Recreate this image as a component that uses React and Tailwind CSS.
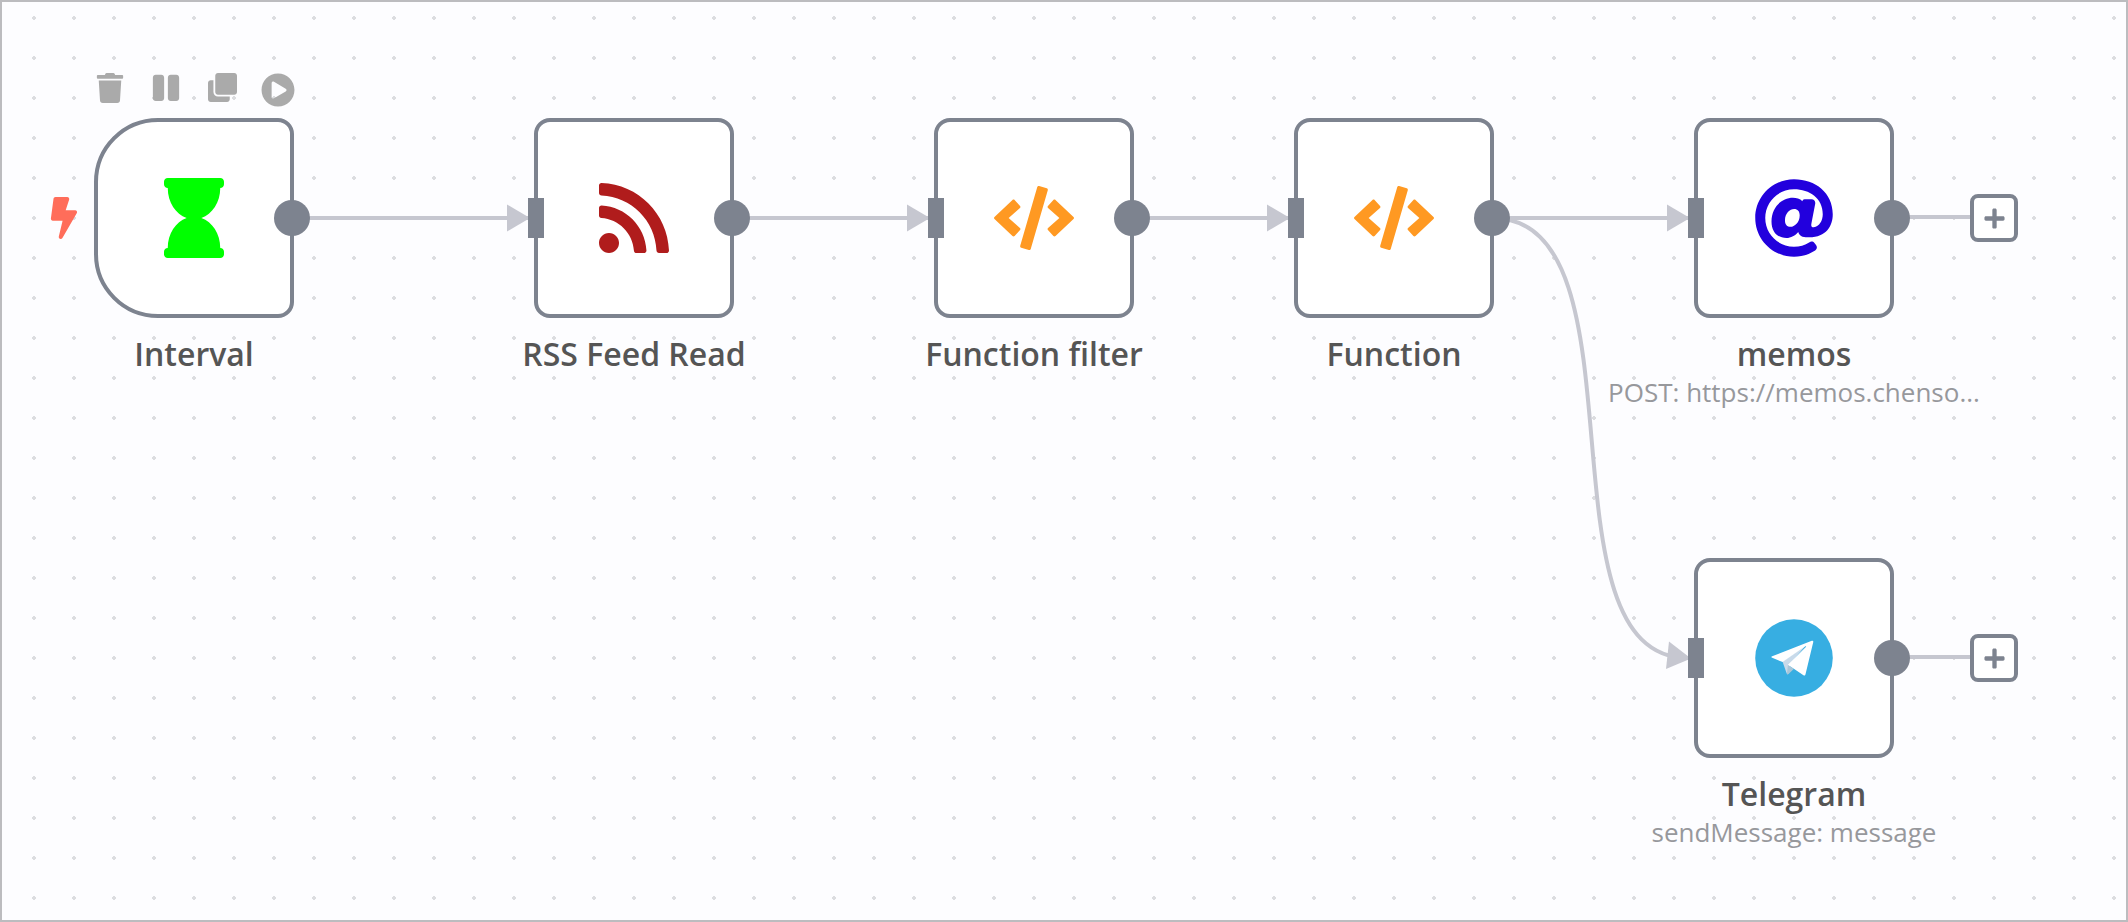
import { FaTrash, FaPause, FaClone, FaPlayCircle, FaBolt, FaHourglass, FaRss, FaCode, FaAt, FaPlus } from "react-icons/fa";

function TelegramIcon() {
  return (
    <svg viewBox="0 0 66 66" className="size-20" aria-hidden="true">
      <circle cx="33" cy="33" r="32" fill="#37aee2" />
      <path fill="#c8daea" d="M23.500 35.800L42.500 22.800 30 37.500 28.300 46.300C27.600 46.600 27.100 46.300 26.900 45.600z" />
      <path fill="#a9c6d8" d="M28 38.600L32.800 42.100 28.500 46.200C28 46.700 27.300 46.600 27.200 46z" />
      <path fill="#fff" d="M28 38.500L40.800 47.300C41.600 47.800 42.300 47.500 42.500 46.500L48.900 19.900C49.100 18.900 48.500 18.500 47.700 18.800L15 31.600C14.100 32 14.200 32.500 15 32.800L23.600 36.300 42.400 23.400C42.900 23.100 43.200 23.500 42.800 23.900z" />
    </svg>
  );
}

const nodes = [
  { id: "interval", name: "Interval", place: "left-[94px] top-[118px]", icon: <FaHourglass className="size-20 text-[#00ff00]" />, trigger: true },
  { id: "rss", name: "RSS Feed Read", place: "left-[534px] top-[118px]", icon: <FaRss className="size-20 text-[#b01c1c]" /> },
  { id: "filter", name: "Function filter", place: "left-[934px] top-[118px]", icon: <FaCode className="size-20 text-[#ff9922]" /> },
  { id: "function", name: "Function", place: "left-[1294px] top-[118px]", icon: <FaCode className="size-20 text-[#ff9922]" /> },
  { id: "memos", name: "memos", note: "POST: https://memos.chenso...", place: "left-[1694px] top-[118px]", icon: <FaAt className="size-20 text-[#2200dd]" />, end: true },
  { id: "telegram", name: "Telegram", note: "sendMessage: message", place: "left-[1694px] top-[558px]", icon: <TelegramIcon />, end: true },
];

const actions = [
  { label: "Delete node", Icon: FaTrash, size: "size-[30px]" },
  { label: "Deactivate node", Icon: FaPause, size: "size-[30px]" },
  { label: "Duplicate node", Icon: FaClone, size: "size-[29px]" },
  { label: "Execute node", Icon: FaPlayCircle, size: "size-[34px]" },
];

function Toolbar() {
  return (
    <div className="absolute bottom-full -left-3 flex items-end pb-[11px]">
      {actions.map(({ label, Icon, size }) => (
        <button key={label} type="button" aria-label={label} className="flex h-[34px] w-14 items-start justify-center text-[#aaaaaa]">
          <Icon className={size} />
        </button>
      ))}
    </div>
  );
}

function Node({ name, note, icon, place, trigger, end }) {
  return (
    <article className={`absolute w-[200px] ${place}`}>
      {trigger && <Toolbar />}
      {trigger && <FaBolt className="absolute top-[79px] -left-[51px] size-[42px] text-[#ff6d5a]" />}
      <div className={`flex h-[200px] items-center justify-center border-4 border-[#7d838f] bg-white ${trigger ? "rounded-l-[64px] rounded-r-2xl" : "rounded-2xl"}`}>
        {icon}
      </div>
      {!trigger && <span className="absolute top-20 -left-1.5 h-10 w-4 bg-[#7d838f]" />}
      {end && (
        <div className="absolute top-[76px] left-[198px] flex items-center">
          <span className="h-1 w-[78px] -translate-y-px bg-[#c6c7d0]" />
          <button type="button" aria-label={`Add node after ${name}`} className="flex size-12 items-center justify-center rounded-lg border-4 border-[#7d838f] bg-white text-[#7d838f]">
            <FaPlus className="size-[23px]" />
          </button>
        </div>
      )}
      <span className="absolute top-[82px] left-[180px] size-9 rounded-full bg-[#7d838f]" />
      <div className="-mx-24 mt-4 text-center whitespace-nowrap">
        <h2 className="text-[32px] leading-10 font-semibold text-[#555555]">{name}</h2>
        {note && <p className="text-[26px] leading-9 text-[#97989c]">{note}</p>}
      </div>
    </article>
  );
}

function Connections() {
  return (
    <svg className="absolute top-0 left-0 h-[922px] w-[2128px]" viewBox="0 0 2128 922" aria-hidden="true">
      <g fill="none" stroke="#c6c7d0" strokeWidth="4">
        <path d="M292 218H528M732 218H928M1132 218H1288M1492 218H1688" />
        <path d="M1492 218C1652 218 1532 658 1688 658" />
      </g>
      <g fill="#c6c7d0">
        {[507, 907, 1267, 1667].map((x) => (
          <path key={x} d={`M${x} 204.500l23 13.500-23 13.500z`} />
        ))}
        <path d="M1669 641.500l22 17-25 10.500z" />
      </g>
    </svg>
  );
}

export default function App() {
  return (
    <main className="relative min-h-screen overflow-hidden bg-[#fdfdff] bg-[radial-gradient(circle,#dcdde0_2px,transparent_2px)] bg-[length:40px_40px] bg-[position:14px_38px] bg-origin-border font-['Open_Sans','Noto_Sans',sans-serif]">
      <Connections />
      {nodes.map(({ id, ...node }) => (
        <Node key={id} {...node} />
      ))}
      <div className="pointer-events-none absolute inset-0 border-2 border-[#bcbcbf]" />
    </main>
  );
}
